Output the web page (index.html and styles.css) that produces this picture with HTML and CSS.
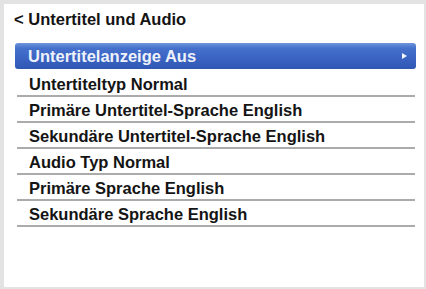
FILE: index.html
```html
<!DOCTYPE html>
<html lang="de">
<head>
<meta charset="utf-8">
<link rel="stylesheet" href="styles.css">
</head>
<body>
<div class="panel">
  <div class="title">&lt; Untertitel und Audio</div>
  <ul class="menu">
    <li class="item active"><span>Untertitelanzeige Aus</span><span class="arrow"></span></li>
    <li class="item">Untertiteltyp Normal</li>
    <li class="item">Primäre Untertitel-Sprache English</li>
    <li class="item">Sekundäre Untertitel-Sprache English</li>
    <li class="item">Audio Typ Normal</li>
    <li class="item">Primäre Sprache English</li>
    <li class="item">Sekundäre Sprache English</li>
  </ul>
</div>
</body>
</html>
```
FILE: styles.css
```css
html, body {
  margin: 0;
  padding: 0;
  background: #e3e3e3;
  width: 426px;
  height: 289px;
  overflow: hidden;
}
body {
  font-family: "Liberation Sans", Arial, sans-serif;
  font-weight: bold;
  color: #141414;
}
.panel {
  margin: 4px 2px 0 4px;
  width: 420px;
  height: 283px;
  background: #ffffff;
  box-sizing: border-box;
  padding-top: 6px;
}
.title {
  font-size: 16.5px;
  line-height: 18px;
  padding-left: 10px;
}
.menu {
  list-style: none;
  margin: 15px 0 0 11px;
  padding: 0;
  width: 401px;
}
.item {
  font-size: 16.5px;
  height: 23px;
  line-height: 24px;
  padding-left: 12px;
  margin: 0 1px 0 2px;
  border-bottom: 2px solid #ababab;
  padding-top: 1px;
  padding-right: 0;
  white-space: nowrap;
}
.item.active {
  height: 26px;
  line-height: 26px;
  padding-top: 0;
  margin: 0 0 2px 0;
  padding-left: 13px;
  border-bottom: none;
  border-radius: 3px;
  color: #eef2fb;
  background: linear-gradient(to bottom, #6f95dc 0%, #4571cc 20%, #3a63c2 60%, #3058b3 100%);
  display: flex;
  align-items: center;
  justify-content: space-between;
  padding-right: 9px;
}
.arrow {
  width: 0;
  height: 0;
  border-top: 3px solid transparent;
  border-bottom: 3px solid transparent;
  border-left: 5px solid #f4f6fc;
}
```
